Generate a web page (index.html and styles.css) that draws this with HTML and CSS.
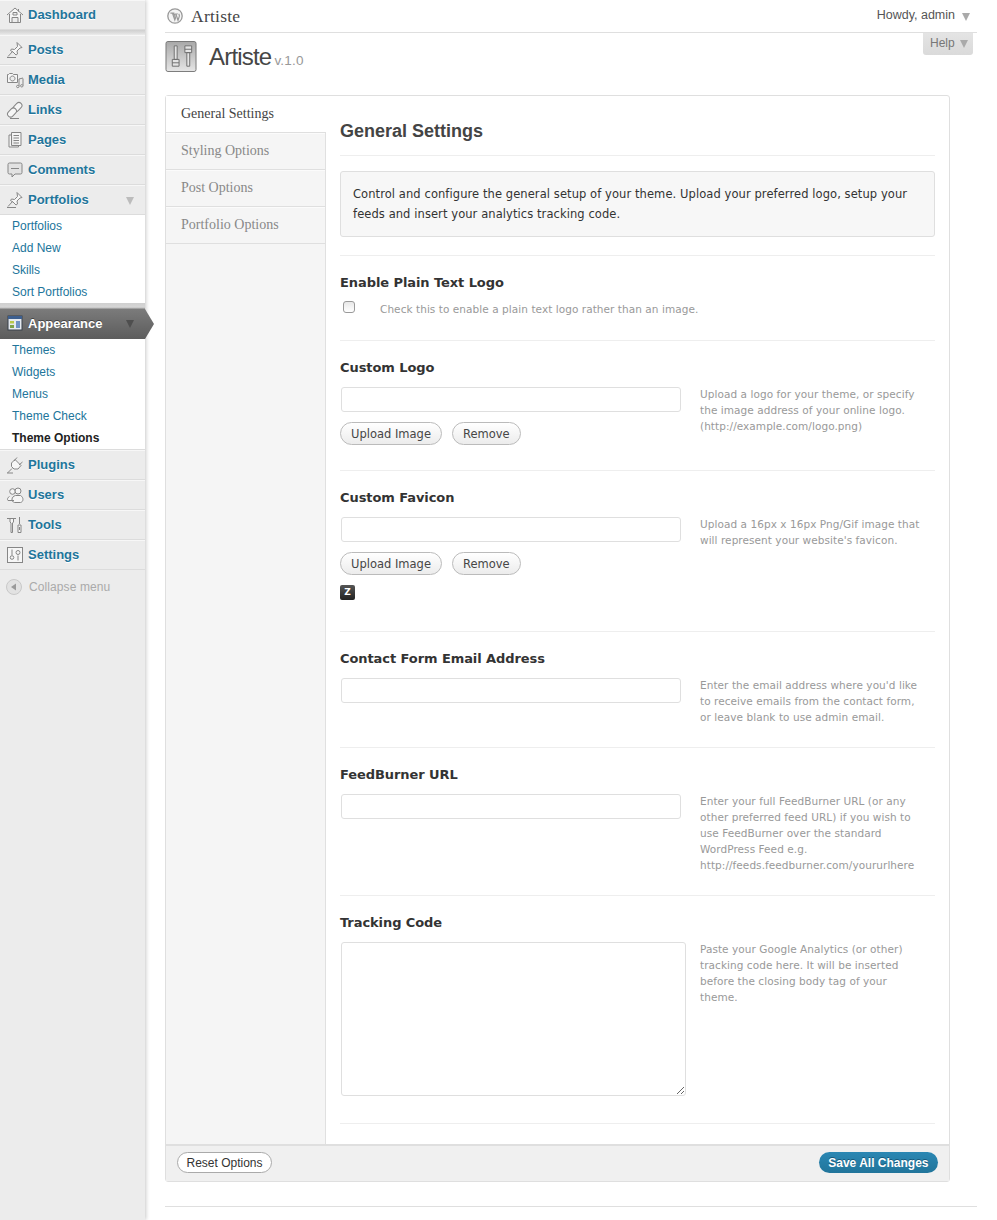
FILE: index.html
```html
<!DOCTYPE html>
<html lang="en">
<head>
<meta charset="utf-8">
<title>Artiste</title>
<link rel="stylesheet" href="styles.css">
</head>
<body>
<div class="page">
<nav class="sidebar">
  <a class="menu first"><svg class="ico" viewBox="0 0 18 18"><path class="ln" d="M1 9 9 2l8 7M3.500 8v8.500h11V8M6 16.500v-5h6v5M12.500 3v2.500M7 6.500h4v2.500H7z"/></svg><span>Dashboard</span></a>
  <div class="sep"></div>
  <a class="menu"><svg class="ico" viewBox="0 0 18 18"><path class="ln" d="M11 1.500l5 5-2 .5-3 3 .5 3-1.500 1-3-3-2.500-1.500 1-1.500 3 .5 3-3zM6.500 10.500 2 15.500M1 16.500h9"/></svg><span>Posts</span></a>
  <a class="menu"><svg class="ico" viewBox="0 0 18 18"><path class="ln" d="M1.500 3.500h1l1-1h3l1 1h4v8h-10zM6.500 5a2.500 2.500 0 1 0 .01 0M13 8v7.500M17 7.500v7M13 8l4-1"/><circle class="ln" cx="11.800" cy="15.500" r="1.200"/><circle class="ln" cx="15.800" cy="14.800" r="1.200"/></svg><span>Media</span></a>
  <a class="menu"><svg class="ico" viewBox="0 0 18 18"><rect class="ln" x="8.500" y="1" width="6" height="10" rx="3" transform="rotate(45 11.500 6)"/><rect class="ln" x="3" y="6.500" width="6" height="10" rx="3" transform="rotate(45 6 11.500)"/><path class="ln" d="M4 17.500h9"/></svg><span>Links</span></a>
  <a class="menu"><svg class="ico" viewBox="0 0 18 18"><path class="ln" d="M5.500 1.500h9.500v13H5.500zM5.500 4H3v12h9.500v-1.500M7.500 4.500h5.500M7.500 7h5.500M7.500 9.500h5.500M7.500 12h5.500"/></svg><span>Pages</span></a>
  <a class="menu"><svg class="ico" viewBox="0 0 18 18"><path class="ln bubble" d="M3.500 2h11a1.500 1.500 0 0 1 1.500 1.500v8a1.500 1.500 0 0 1-1.500 1.500H9l-3 3v-3H3.500A1.500 1.500 0 0 1 2 11.500v-8A1.500 1.500 0 0 1 3.500 2zM5 7.500h8"/></svg><span>Comments</span></a>
  <a class="menu open"><svg class="ico" viewBox="0 0 18 18"><path class="ln" d="M11 1.500l5 5-2 .5-3 3 .5 3-1.500 1-3-3-2.500-1.500 1-1.500 3 .5 3-3zM6.500 10.500 2 15.500M1 16.500h9"/></svg><span>Portfolios</span><i class="arrow"></i></a>
  <ul class="sub">
    <li>Portfolios</li><li>Add New</li><li>Skills</li><li>Sort Portfolios</li>
  </ul>
  <div class="sep sep-tight"></div>
  <a class="menu current"><svg class="ico" viewBox="0 0 18 18"><rect x="2" y="2" width="14" height="14" fill="#e4e9ef" stroke="#39414a"/><rect x="2" y="2" width="14" height="3" fill="#3d5f8f"/><rect x="4" y="7" width="4" height="2.500" fill="#b9c94a"/><rect x="4" y="11" width="4" height="3" fill="#7ea34a"/><rect x="10" y="7" width="4" height="7" fill="#6f93c4"/></svg><span>Appearance</span><i class="arrow"></i></a>
  <ul class="sub sub-current">
    <li>Themes</li><li>Widgets</li><li>Menus</li><li>Theme Check</li><li class="on">Theme Options</li>
  </ul>
  <a class="menu"><svg class="ico" viewBox="0 0 18 18"><path class="ln" d="M9 3.500l6 6-3 3.500H8l-2.500-2.500V7zM11 1.500l-3 3.500M16.500 6l-3.500 3M6 12.500l-4.500 4.500M1 17h6"/></svg><span>Plugins</span></a>
  <a class="menu"><svg class="ico" viewBox="0 0 18 18"><circle class="ln" cx="6.500" cy="5.500" r="2.800"/><circle class="ln" cx="12" cy="5" r="3"/><path class="ln" d="M3.500 10.500c-2 1-2.500 3-1.500 4h6M9.500 9.500c-4 1-5 6-1 7h6c3-.5 3.500-5 0-7z"/></svg><span>Users</span></a>
  <a class="menu"><svg class="ico" viewBox="0 0 18 18"><path class="ln" d="M1 2.500h9M4 3v3l1 1v9.500h1.500V7l1-1V3M13.500 1v7M12 9h3v7.500h-3zM13.500 11v3"/></svg><span>Tools</span></a>
  <a class="menu"><svg class="ico" viewBox="0 0 18 18"><rect class="ln" x="1.500" y="1.500" width="15" height="15"/><path class="ln" d="M6 3.500V9M12 9.500v5"/><circle class="ln" cx="6" cy="11.500" r="1.800"/><circle class="ln" cx="12" cy="6.500" r="2"/></svg><span>Settings</span></a>
  <div class="collapse"><svg class="col-ico" viewBox="0 0 16 16"><circle cx="8" cy="8" r="7.500" fill="#e2e2e2" stroke="#c8c8c8"/><path d="M10 4.500v7L5 8z" fill="#9a9a9a"/></svg><span>Collapse menu</span></div>
</nav>

<main class="main">
  <header class="topbar">
    <div class="site"><svg class="wp" viewBox="0 0 16 16"><circle cx="8" cy="8" r="7.200" fill="#f4f4f4" stroke="#999" stroke-width="1.300"/><path d="M3.400 5.200h3L5.800 6l2 6 .7-2-1-3.500-.7-.5h3l-.7.600 1.900 5.800 1.300-4c.3-1 -.2-2-.6-2.400" fill="none" stroke="#999" stroke-width="1.200"/></svg><span>Artiste</span></div>
    <div class="howdy">Howdy, admin<i class="arrow arrow-howdy"></i></div>
  </header>
  <div class="help">Help<i class="arrow arrow-help"></i></div>
  <div class="title">
    <svg class="title-ico" viewBox="0 0 32 32"><defs><linearGradient id="g" x1="0" y1="0" x2="0" y2="1"><stop offset="0" stop-color="#a8a8a8"/><stop offset="1" stop-color="#e6e6e6"/></linearGradient></defs><rect x=".5" y=".5" width="31" height="31" rx="2" fill="url(#g)" stroke="#777"/><path d="M9 5h3v14H9zM7 19h7v7H7zM7 22.500h7M20 5h7v7h-7zM22 12h3v14h-3zM20 8.500h7" fill="#e4e4e4" stroke="#6e6e6e"/></svg>
    <h1>Artiste<small>v.1.0</small></h1>
  </div>

  <div class="panel">
    <div class="panel-body">
      <ul class="tabs">
        <li class="active">General Settings</li>
        <li>Styling Options</li>
        <li>Post Options</li>
        <li>Portfolio Options</li>
      </ul>
      <div class="content">
        <h2>General Settings</h2>
        <div class="intro-wrap"><p class="intro">Control and configure the general setup of your theme. Upload your preferred logo, setup your feeds and insert your analytics tracking code.</p></div>

        <section class="field">
          <h3>Enable Plain Text Logo</h3>
          <div class="check-row"><input class="check" type="checkbox"><p class="note">Check this to enable a plain text logo rather than an image.</p></div>
        </section>

        <section class="field">
          <h3>Custom Logo</h3>
          <div class="row">
            <div class="ctrl">
              <input class="text" type="text">
              <div class="btns"><button class="btn">Upload Image</button><button class="btn">Remove</button></div>
            </div>
            <p class="note side">Upload a logo for your theme, or specify the image address of your online logo. (http://example.com/logo.png)</p>
          </div>
        </section>

        <section class="field">
          <h3>Custom Favicon</h3>
          <div class="row">
            <div class="ctrl">
              <input class="text" type="text">
              <div class="btns"><button class="btn">Upload Image</button><button class="btn">Remove</button></div>
              <div class="fav">Z</div>
            </div>
            <p class="note side">Upload a 16px x 16px Png/Gif image that will represent your website's favicon.</p>
          </div>
        </section>

        <section class="field plain">
          <h3>Contact Form Email Address</h3>
          <div class="row">
            <div class="ctrl"><input class="text" type="text"></div>
            <p class="note side">Enter the email address where you'd like to receive emails from the contact form, or leave blank to use admin email.</p>
          </div>
        </section>

        <section class="field plain">
          <h3>FeedBurner URL</h3>
          <div class="row">
            <div class="ctrl"><input class="text" type="text"></div>
            <p class="note side">Enter your full FeedBurner URL (or any other preferred feed URL) if you wish to use FeedBurner over the standard WordPress Feed e.g. http://feeds.feedburner.com/yoururlhere</p>
          </div>
        </section>

        <section class="field">
          <h3>Tracking Code</h3>
          <div class="row">
            <div class="ctrl"><textarea class="area"></textarea></div>
            <p class="note side">Paste your Google Analytics (or other) tracking code here. It will be inserted before the closing body tag of your theme.</p>
          </div>
        </section>
      </div>
    </div>
    <footer class="panel-foot">
      <button class="reset">Reset Options</button>
      <button class="save">Save All Changes</button>
    </footer>
  </div>
  <div class="endline"></div>
</main>
</div>
</body>
</html>
```
FILE: styles.css
```css
* { box-sizing: border-box; }
html, body { margin: 0; padding: 0; background: #fff; }
body { font-family: "Liberation Sans", Arial, sans-serif; color: #333; }
ul { list-style: none; margin: 0; padding: 0; }
p, h1, h2, h3 { margin: 0; }
.page { display: flex; width: 997px; height: 1220px; overflow: hidden; }

/* sidebar */
.sidebar { width: 145px; flex: none; background: #ececec; box-shadow: 1px 0 4px rgba(0,0,0,.22); position: relative; z-index: 2; }
.menu { position: relative; display: flex; align-items: center; height: 30px; padding: 0 0 2px 28px; border-top: 1px solid #f7f7f7; border-bottom: 1px solid #dcdcdc; font-weight: bold; font-size: 13px; color: #21759b; text-shadow: 0 1px 0 #fff; }
.ico { position: absolute; left: 6px; top: 5px; width: 18px; height: 18px; }
.ln { fill: #f6f6f6; stroke: #868686; stroke-width: 1; fill-rule: evenodd; }
.bubble { fill: #e2e2e2; }
.sep { height: 5px; background: linear-gradient(#cfcfcf, #dedede 60%, #ececec); }
.sep-tight { height: 6px; background: linear-gradient(#cfcfcf, #d6d6d6 70%, #8c8c8c); }
.arrow { position: absolute; right: 11px; top: 11px; width: 0; height: 0; border: 4px solid transparent; border-top: 8px solid #bcbcbc; border-bottom: 0; }
.sub { background: #fff; padding: 0; }
.sub li { height: 22px; padding-left: 12px; font-size: 12px; line-height: 22px; color: #21759b; }
.sub-current { border-bottom: 1px solid #dcdcdc; }
.sub .on { color: #222; font-weight: bold; }
.current { background: linear-gradient(#7b7b7b, #5c5c5c); color: #fff; text-shadow: 0 -1px 0 #444; border: 0; overflow: visible; }
.current::after { content: ""; position: absolute; left: 145px; top: 0; width: 9px; height: 30px; background: linear-gradient(#7b7b7b, #5c5c5c); clip-path: polygon(0 0, 100% 50%, 0 100%); }
.current .arrow { border-top-color: #4e4e4e; }
.collapse { display: flex; align-items: center; height: 34px; padding-left: 6px; gap: 7px; font-size: 12px; color: #aaa; letter-spacing: .1px; }
.col-ico { width: 16px; height: 16px; }

/* main */
.main { flex: none; width: 852px; padding-left: 20px; position: relative; }
.topbar { width: 812px; height: 33px; border-bottom: 1px solid #dfdfdf; display: flex; justify-content: space-between; align-items: center; padding: 0 4px 0 2px; }
.site { display: flex; align-items: center; gap: 8px; font-family: "Liberation Serif", Georgia, serif; font-size: 17.500px; color: #464646; letter-spacing: .25px; }
.wp { width: 16px; height: 16px; }
.howdy { position: relative; font-size: 12.500px; color: #555; padding-right: 18px; margin-top: -3px; }
.arrow-howdy { right: 3px; top: 5px; border-top-color: #aaa; }
.help { position: absolute; left: 778px; top: 33px; width: 50px; height: 22px; background: linear-gradient(#e4e4e4, #dadada); border-radius: 0 0 3px 3px; font-size: 12px; color: #777; line-height: 21px; padding-left: 7px; }
.arrow-help { right: 5px; top: 7px; border-top-color: #aaa; }
.title { display: flex; align-items: flex-start; height: 62px; padding-top: 8px; }
.title-ico { width: 32px; height: 31px; }
.title h1 { margin-left: 12px; font-size: 24px; font-weight: normal; color: #464646; letter-spacing: -.8px; line-height: 31px; }
.title small { font-size: 13.500px; color: #999; letter-spacing: .2px; margin-left: 3px; }

.panel { width: 785px; height: 1087px; border: 1px solid #dfdfdf; border-radius: 3px; display: flex; flex-direction: column; }
.panel-body { flex: 1; display: flex; min-height: 0; }
.tabs { width: 160px; flex: none; background: #f5f5f5; border-right: 1px solid #e0e0e0; }
.tabs li { height: 37px; border-bottom: 1px solid #dfdfdf; border-top: 1px solid #fbfbfb; padding-left: 15px; font-family: "Liberation Serif", Georgia, serif; font-size: 14px; line-height: 33px; color: #888; }
.tabs .active { background: #fff; color: #444; border-top: 0; line-height: 35px; margin-right: -1px; position: relative; }
.content { flex: 1; min-width: 0; padding: 0 14px 0 14px; }
h2 { height: 60px; border-bottom: 1px solid #eee; font-size: 18px; line-height: 71px; color: #444; }
.intro-wrap { padding: 15px 0 18px; border-bottom: 1px solid #eee; }
.intro { height: 66px; background: #f7f7f7; border: 1px solid #dfdfdf; border-radius: 3px; padding: 12px 12px 0; font-family: "DejaVu Sans", sans-serif; font-size: 11.500px; line-height: 20px; letter-spacing: .08px; color: #333; }
.field { padding: 17px 0 22px; border-bottom: 1px solid #eee; }
h3 { height: 20px; font-family: "DejaVu Sans", sans-serif; font-size: 13px; line-height: 20px; letter-spacing: -.08px; color: #333; margin-bottom: 9px; }
.check-row { display: flex; margin-top: -1px; height: 17px; }
.check { appearance: none; width: 12px; height: 12px; margin: 0 25px 0 3px; background: linear-gradient(#e8e8e8, #fff); border: 1px solid #9a9a9a; border-radius: 3px; }
.note { font-family: "DejaVu Sans", sans-serif; font-size: 10.500px; line-height: 16px; letter-spacing: .06px; color: #999; }
.row { display: flex; }
.ctrl { width: 360px; flex: none; padding-left: 1px; }
.side { width: 224px; margin-top: -1px; }
.text { display: block; width: 340px; height: 25px; border: 1px solid #dfdfdf; border-radius: 3px; background: #fff; padding: 0; }
.btns { display: flex; gap: 10px; margin: 10px 0 3px -1px; }
.btn { height: 23px; padding: 0 10px; border: 1px solid #bbb; border-radius: 12px; background: linear-gradient(#fff, #ececec); font-family: "DejaVu Sans", sans-serif; font-size: 11.500px; color: #464646; }
.fav { width: 15px; height: 15px; margin: 10px 0 9px -1px; background: linear-gradient(#555, #222); border-radius: 2px; color: #fff; font-family: "DejaVu Sans", sans-serif; font-weight: bold; font-size: 9px; line-height: 15px; text-align: center; }
.plain .text { margin-bottom: -1px; }
.area { display: block; width: 345px; height: 154px; margin-bottom: 5px; border: 1px solid #dfdfdf; border-radius: 3px; background: #fff; padding: 0; }
.panel-foot { flex: none; height: 37px; background: #f0f0f0; border-top: 2px solid #dfdfdf; display: flex; justify-content: space-between; align-items: center; padding: 0 11px 2px; }
.reset { height: 21px; padding: 0 8.500px; border: 1px solid #aaa; border-radius: 11px; background: #fff; font-family: "Liberation Sans", sans-serif; font-size: 12px; color: #333; }
.save { height: 21px; padding: 0 9.500px; border: 0; border-radius: 11px; background: linear-gradient(#2b87b3, #21759b); font-family: "Liberation Sans", sans-serif; font-weight: bold; font-size: 12px; color: #fff; text-shadow: 0 -1px 0 #17587a; }
.endline { width: 812px; margin-top: 24px; border-top: 1px solid #dfdfdf; }
```
